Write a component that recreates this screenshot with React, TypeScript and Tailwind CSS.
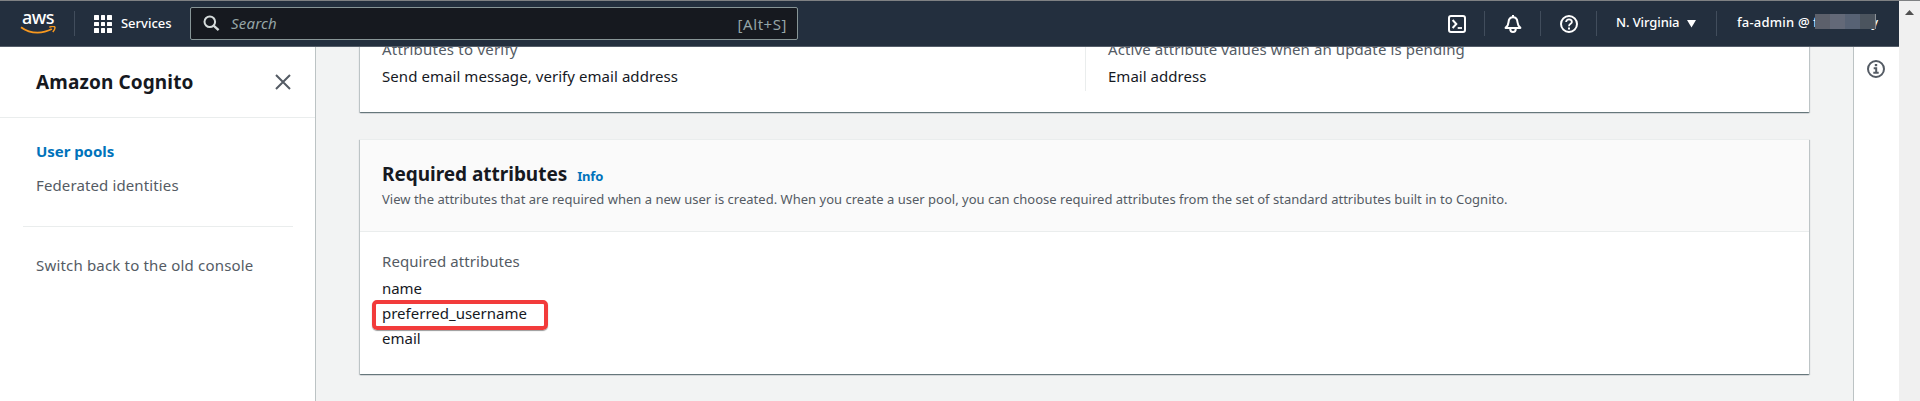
import type { ReactNode } from "react";

function AwsLogo() {
  return (
    <div className="flex w-[36px] flex-col items-center pt-[1px]">
      <span className="h-[13px] text-[18px] leading-[9px] font-medium tracking-[-0.5px] text-white">aws</span>
      <svg width="36" height="9" viewBox="0 0 36 9" className="block" fill="none" stroke="#f7981f">
        <path d="M1 1.2C6 4.9 12 6.6 17.5 6.6C22.5 6.6 27.5 5.3 31.8 3" strokeWidth="1.9" />
        <path d="M29.3 1.2C31.5 0.4 34.2 0.3 34.7 0.9C35.2 1.6 34.3 4.2 32.8 6" strokeWidth="1.5" />
      </svg>
    </div>
  );
}

function Divider() {
  return <div className="h-[25px] w-px shrink-0 bg-[#414d5c]" />;
}

function GridIcon() {
  return (
    <div className="grid grid-cols-3 gap-[2px]">
      {Array.from({ length: 9 }, (_, i) => (
        <div key={i} className="size-[4.67px] rounded-[0.5px] bg-white" />
      ))}
    </div>
  );
}

function SearchIcon() {
  return (
    <svg width="17" height="17" viewBox="0 0 17 17" fill="none" stroke="#d5dbdb" strokeWidth="2">
      <circle cx="6.8" cy="6.8" r="5.3" />
      <path d="M10.6 10.6L15.6 15.2" strokeWidth="2.3" />
    </svg>
  );
}

function ShellIcon() {
  return (
    <svg width="18" height="18" viewBox="0 0 18 18" fill="none" stroke="#fff" strokeWidth="2">
      <rect x="1" y="1" width="16" height="16" rx="2" />
      <path d="M4.6 5L8.3 9L4.6 13" />
      <path d="M9.7 13H14" strokeWidth="1.8" />
    </svg>
  );
}

function BellIcon() {
  return (
    <svg width="18" height="18" viewBox="0 0 18 18" fill="none" stroke="#fff" strokeWidth="2" strokeLinejoin="round">
      <path d="M9 0V2" />
      <path d="M1.6 12.9C3.6 11.3 4.3 9.6 4.5 7.3C4.7 4.4 6.5 2.3 9 2.3S13.3 4.4 13.5 7.3C13.7 9.6 14.4 11.3 16.4 12.9Z" />
      <path d="M6.2 13.5C6.2 15.7 7.3 17 9 17S11.8 15.7 11.8 13.5" />
    </svg>
  );
}

function HelpIcon() {
  return (
    <svg width="18" height="18" viewBox="0 0 18 18" fill="none" stroke="#fff" strokeWidth="2">
      <circle cx="9" cy="9" r="8" />
      <path d="M6.1 7.1C6.1 5.4 7.3 4.3 9 4.3S11.9 5.3 11.9 6.9C11.9 8.8 9 8.8 9 11.2" strokeWidth="1.8" />
      <path d="M9 12.5V14.5" />
    </svg>
  );
}

function InfoIcon() {
  return (
    <svg width="18" height="18" viewBox="0 0 18 18" fill="none" stroke="#545b64" strokeWidth="2">
      <circle cx="9" cy="9" r="8" />
      <path d="M9 4V6.2" strokeWidth="2.4" />
      <path d="M6.7 8.2H9.2V12.6M6.3 12.7H11.7" />
    </svg>
  );
}

function Header() {
  return (
    <header className="flex h-[47px] w-[1899px] items-center border-t border-b border-t-[#7f8183] border-b-[#545d69] bg-[#232f3e] text-[13px] font-medium text-white">
      <div className="flex w-[74px] pl-[20px]"><AwsLogo /></div>
      <Divider />
      <div className="flex w-[115px] items-center pl-[19px]">
        <div className="pt-[1px]"><GridIcon /></div>
        <span className="pl-[9px]">Services</span>
      </div>
      <div className="flex h-[33px] w-[608px] items-center rounded-[2px] border border-[#879596] bg-[#16191f] text-[15px] font-normal text-[#95a5a6]">
        <div className="pl-[12px]"><SearchIcon /></div>
        <span className="grow pl-[11px] tracking-[0.2px] italic">Search</span>
        <span className="pt-[2px] pr-[10px] tracking-[0.55px]">[Alt+S]</span>
      </div>
      <div className="ml-auto flex items-center">
        <div className="w-[36px] pt-[1px]"><ShellIcon /></div>
        <Divider />
        <div className="w-[55px] pt-[1px] pl-[19px]"><BellIcon /></div>
        <Divider />
        <div className="w-[55px] pt-[1px] pl-[19px]"><HelpIcon /></div>
        <Divider />
        <div className="flex w-[119px] items-center pl-[19px]">
          <span className="w-[71px] pb-[2px] tracking-[-0.1px]">N. Virginia</span>
          <svg width="9" height="8" viewBox="0 0 9 8" fill="#fff"><path d="M0 0H9L4.5 7.6Z" /></svg>
        </div>
        <Divider />
        <div className="flex w-[182px] items-center pb-[2px] pl-[20px]">
          <span className="w-[76px] tracking-[0.2px]">fa-admin @</span>
          <div className="relative flex w-[65px] justify-between">
            <span>f</span>
            <span>y</span>
            <div className="absolute top-[1px] left-[2px] flex h-[15px] w-[61px]">
              <div className="w-[15px] bg-[#5c606b]" />
              <div className="w-[15px] bg-[#636978]" />
              <div className="w-[15px] bg-[#576274]" />
              <div className="w-[15px] bg-[#4b545e]" />
              <div className="w-px bg-[#8a9096]" />
            </div>
          </div>
        </div>
      </div>
    </header>
  );
}

function Sidebar() {
  return (
    <nav className="w-[316px] shrink-0 border-r border-[#bcc3c4] bg-white text-[15px] leading-[22px] text-[#545b64]">
      <div className="flex h-[71px] items-center justify-between border-b border-[#eaeded] pr-[24px] pl-[36px]">
        <h2 className="text-[19px] font-bold tracking-[0.12px] text-[#16191f]">Amazon Cognito</h2>
        <svg width="16" height="16" viewBox="0 0 16 16" stroke="#545b64" strokeWidth="2"><path d="M1 1L15 15M15 1L1 15" /></svg>
      </div>
      <div className="flex flex-col gap-3 pt-[22px] pl-[36px]">
        <a className="font-bold tracking-[-0.05px] text-[#0073bb]">User pools</a>
        <a className="tracking-[0.12px]">Federated identities</a>
      </div>
      <div className="mx-[23px] mt-[30px] h-px w-[270px] bg-[#eaeded]" />
      <div className="pt-[27px] pl-[36px] tracking-[0.18px]">Switch back to the old console</div>
    </nav>
  );
}

function Card({ children }: { children: ReactNode }) {
  return (
    <section className="w-[1449px] border-t border-[#eaeded] bg-white shadow-[0_1px_1px_0_rgba(0,28,36,0.4),1px_1px_1px_0_rgba(0,28,36,0.16),-1px_1px_1px_0_rgba(0,28,36,0.16)]">
      {children}
    </section>
  );
}

export default function App() {
  return (
    <div className="flex h-[401px] w-[1920px] overflow-hidden bg-[#f2f3f3] font-['Noto_Sans',sans-serif] text-[#16191f]">
      <div className="flex w-[1899px] flex-col">
        <Header />
        <div className="flex min-h-0 grow">
          <Sidebar />
          <main className="grow overflow-hidden pl-[44px] text-[15px] leading-[22px]">
            <div className="-mt-[30px]">
              <Card>
                <div className="flex h-[94px] pt-[20px] pl-[22px]">
                  <div className="h-[53px] w-[703px]">
                    <div className="tracking-[0.22px] text-[#545b64]">Attributes to verify</div>
                    <div className="pt-[5px] tracking-[0.06px]">Send email message, verify email address</div>
                  </div>
                  <div className="h-[53px] border-l border-[#eaeded] pl-[22px]">
                    <div className="tracking-[0.1px] text-[#545b64]">Active attribute values when an update is pending</div>
                    <div className="pt-[5px] tracking-[0.03px]">Email address</div>
                  </div>
                </div>
              </Card>
            </div>
            <div className="pt-[27px]">
              <Card>
                <div className="h-[92px] border-b border-[#eaeded] bg-[#fafafa] pt-[21px] pl-[22px]">
                  <div className="flex items-baseline gap-[10px]">
                    <h2 className="text-[19px] leading-[26px] font-bold tracking-[-0.03px]">Required attributes</h2>
                    <a className="text-[13px] font-bold tracking-[-0.2px] text-[#0073bb]">Info</a>
                  </div>
                  <p className="pt-[1px] text-[13px] tracking-[0.013px] text-[#545b64]">
                    View the attributes that are required when a new user is created. When you create a user pool, you can choose required attributes from the set of standard attributes built in to Cognito.
                  </p>
                </div>
                <div className="h-[142px] pt-[18px] pl-[22px]">
                  <div className="tracking-[0.07px] text-[#545b64]">Required attributes</div>
                  <div className="pt-[4px] leading-[25px]">
                    <div className="tracking-[-0.05px]">name</div>
                    <div className="relative">
                      preferred_username
                      <div className="absolute -top-[1px] -left-[10px] h-[30px] w-[176px] rounded-[5px] border-4 border-[#f23b3b] shadow-[0_1px_1px_rgba(0,0,0,0.4)]" />
                    </div>
                    <div>email</div>
                  </div>
                </div>
              </Card>
            </div>
          </main>
          <aside className="w-[46px] shrink-0 border-l border-[#bcc3c4] bg-white pt-[13px] pl-[13px]"><InfoIcon /></aside>
        </div>
      </div>
      <div className="flex w-[21px] justify-center border-t border-[#7f8183] bg-[#f0f0f0] pt-[9px]">
        <svg width="9" height="5" viewBox="0 0 9 5" fill="#505050"><path d="M0 5L4.5 0L9 5Z" /></svg>
      </div>
    </div>
  );
}
